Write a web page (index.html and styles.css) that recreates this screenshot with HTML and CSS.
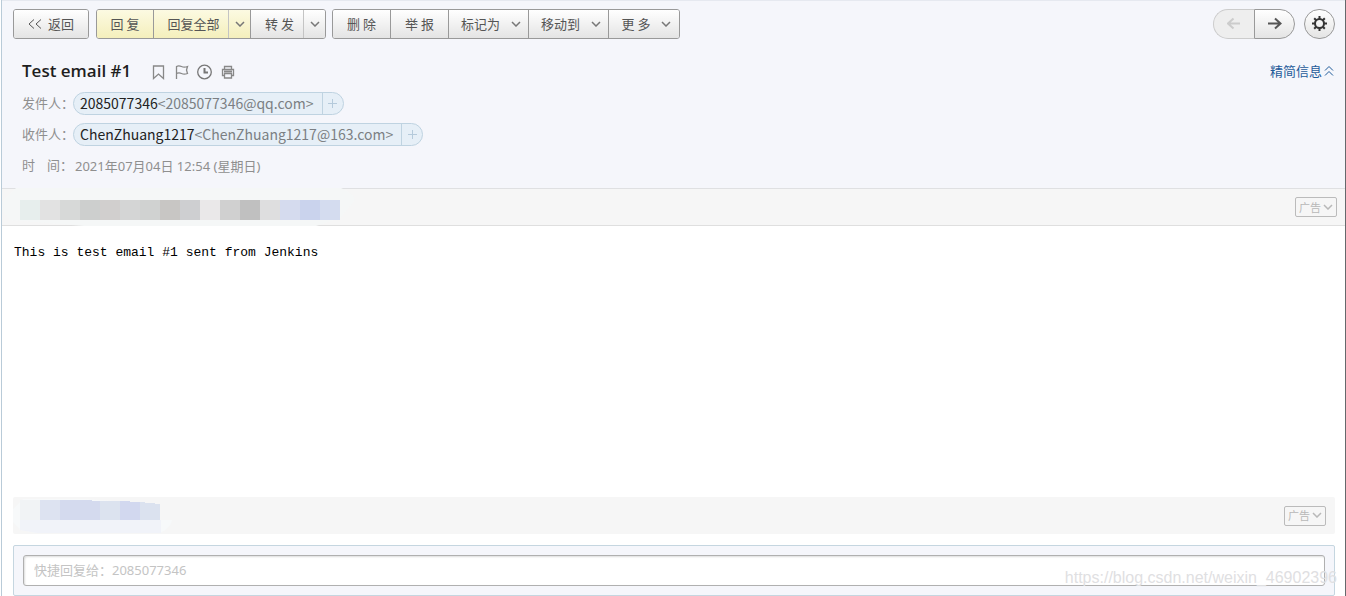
FILE: index.html
```html
<!DOCTYPE html>
<html lang="zh-CN">
<head>
  <meta charset="UTF-8" />
  <meta name="viewport" content="width=device-width, initial-scale=1.0" />
  <title>Test email #1</title>
  <link rel="stylesheet" href="styles.css">
</head>
<body>
  <main class="mail">
    <header class="mail-head">
      <div class="toolbar">
        <div class="btn-group">
          <button class="btn btn-back"><span class="back-mark"><svg width="14" height="10" viewBox="0 0 14 10"><path d="M6 .5 1 5l5 4.5M13 .5 8 5l5 4.5" /></svg></span>返回</button>
        </div>
        <div class="btn-group">
          <button class="btn btn-reply yellow">回 复</button>
          <button class="btn btn-all yellow">回复全部</button>
          <button class="btn btn-arrow yellow" aria-label="更多回复方式"><svg class="arrow" width="10" height="6" viewBox="0 0 10 6"><path d="M1 1l4 4 4-4" /></svg></button>
          <button class="btn btn-forward">转 发</button>
          <button class="btn btn-arrow" aria-label="更多转发方式"><svg class="arrow" width="10" height="6" viewBox="0 0 10 6"><path d="M1 1l4 4 4-4" /></svg></button>
        </div>
        <div class="btn-group">
          <button class="btn btn-reply delete">删 除</button>
          <button class="btn btn-reply">举 报</button>
          <button class="btn btn-menu">标记为<svg class="arrow" width="10" height="6" viewBox="0 0 10 6"><path d="M1 1l4 4 4-4" /></svg></button>
          <button class="btn btn-menu">移动到<svg class="arrow" width="10" height="6" viewBox="0 0 10 6"><path d="M1 1l4 4 4-4" /></svg></button>
          <button class="btn btn-more">更 多<svg class="arrow" width="10" height="6" viewBox="0 0 10 6"><path d="M1 1l4 4 4-4" /></svg></button>
        </div>
        <div class="pager">
          <button class="page-btn prev" disabled aria-label="上一封"><svg width="14" height="14" viewBox="0 0 14 14"><path d="M13 6.500H1M6.500 1.500 1 6.500l5.500 5" /></svg></button>
          <button class="page-btn next" aria-label="下一封"><svg width="14" height="14" viewBox="0 0 14 14"><path d="M0 6.500h12.500M7 1.500l5.500 5-5.500 5" /></svg></button>
          <button class="setting" aria-label="设置"><svg width="16" height="16" viewBox="0 0 16 16"><circle cx="7.500" cy="7.500" r="4.500" /><path d="M7.500 0v3M7.500 12v3M0 7.500h3M12 7.500h3M2.200 2.200l2 2M10.800 10.800l2 2M12.800 2.200l-2 2M4.200 10.800l-2 2" /></svg></button>
        </div>
      </div>

      <div class="subject-row">
        <h1>Test email #1</h1>
        <div class="marks">
          <button class="mark" aria-label="书签"><svg width="16" height="16" viewBox="0 0 16 16"><path d="M3.500 3h10v12.500l-5-4.500-5 4.500z" /></svg></button>
          <button class="mark" aria-label="红旗"><svg width="16" height="16" viewBox="0 0 16 16"><path d="M3.500 16V3.500c2-1.300 3-1 5 0s3.500 1 6 0l-1 3.500 1 3.500c-2.500 1-4 1-6 0s-3-1-5 0" /></svg></button>
          <button class="mark clock" aria-label="待办"><svg width="16" height="16" viewBox="0 0 16 16"><circle cx="8.500" cy="9" r="6.800" /><path class="bold" d="M8.500 5V9.500H12" /></svg></button>
          <button class="mark" aria-label="打印"><svg width="16" height="16" viewBox="0 0 16 16"><path d="M5.500 6V3.500h7V6M5 12.500H3.500v-6h11v6H13M5.500 10.500h7V15h-7z" /><path class="bold" d="M5 8.500h8" /></svg></button>
        </div>
        <a class="simple" href="#">精简信息<svg width="10" height="12" viewBox="0 0 10 12"><path d="M1 5.500l4-4 4 4M1 10.500l4-4 4 4" /></svg></a>
      </div>

      <dl class="info">
        <div class="info-row">
          <dt>发件人：</dt>
          <dd class="contact"><span class="addr"><b>2085077346</b>&lt;2085077346@qq.com&gt;</span><button class="add" aria-label="添加联系人"><svg width="9" height="9" viewBox="0 0 9 9"><path d="M0 4.500h9M4.500 0v9" /></svg></button></dd>
        </div>
        <div class="info-row">
          <dt>收件人：</dt>
          <dd class="contact"><span class="addr"><b>ChenZhuang1217</b>&lt;ChenZhuang1217@163.com&gt;</span><button class="add" aria-label="添加联系人"><svg width="9" height="9" viewBox="0 0 9 9"><path d="M0 4.500h9M4.500 0v9" /></svg></button></dd>
        </div>
        <div class="info-row">
          <dt class="time-label"><span>时</span><span>间：</span></dt>
          <dd class="time">2021年07月04日 12:54 (星期日)</dd>
        </div>
      </dl>
    </header>

    <div class="ad ad-top">
      <svg class="mosaic" width="360" height="38" viewBox="0 0 360 38">
        <path fill="#f5f7f7" d="M0 14 14 0h325q12 5 14 12l-15 18-24 8H82L8 32 0 22z" />
        <g shape-rendering="crispEdges">
          <path fill="#e7eeed" d="M18 12h20v20H18z" />
          <path fill="#e2e2e2" d="M38 12h20v20H38z" />
          <path fill="#d7d9d8" d="M58 12h20v20H58z" />
          <path fill="#cdcfce" d="M78 12h20v20H78z" />
          <path fill="#d1cfce" d="M98 12h20v20H98z" />
          <path fill="#d4d5d5" d="M118 12h20v20h-20z" />
          <path fill="#d0d2d1" d="M138 12h20v20h-20z" />
          <path fill="#c8c6c4" d="M158 12h20v20h-20z" />
          <path fill="#cecfd1" d="M178 12h20v20h-20z" />
          <path fill="#eae8e9" d="M198 12h20v20h-20z" />
          <path fill="#d0d0d0" d="M218 12h20v20h-20z" />
          <path fill="#c0c0c0" d="M238 12h20v20h-20z" />
          <path fill="#dededf" d="M258 12h20v20h-20z" />
          <path fill="#d5dbee" d="M278 12h20v20h-20z" />
          <path fill="#cad3ed" d="M298 12h20v20h-20z" />
          <path fill="#d4dcef" d="M318 12h20v20h-20z" />
        </g>
      </svg>
      <button class="ad-tag">广告<svg class="arrow" width="10" height="6" viewBox="0 0 10 6"><path d="M1 1l4 4 4-4" /></svg></button>
    </div>

    <pre class="content">This is test email #1 sent from Jenkins</pre>

    <div class="ad ad-bottom">
      <svg class="mosaic" width="170" height="37" viewBox="0 0 170 37">
        <path fill="#f7f9fa" d="M0 12 10 2h60l77 5v16h12q-1 8-12 13H24L7 33 0 25z" />
        <path fill="#f1f3f9" d="M7 23h141v13H24L7 33z" />
        <g shape-rendering="crispEdges">
          <path fill="#f1f3f5" d="M7 3h20v20H7z" />
          <path fill="#dde3f1" d="M27 3h20v20H27z" />
          <path fill="#d4daee" d="M47 3h24l16 1v19H47z" />
          <path fill="#dce3ef" d="M87 4h20v19H87z" />
          <path fill="#d2d8ef" d="M107 4l20 1v18h-20z" />
          <path fill="#dbe2ef" d="M127 5l20 2v16h-20z" />
        </g>
      </svg>
      <button class="ad-tag">广告<svg class="arrow" width="10" height="6" viewBox="0 0 10 6"><path d="M1 1l4 4 4-4" /></svg></button>
    </div>

    <form class="quick-reply">
      <input class="reply-input" type="text" aria-label="快捷回复" placeholder="快捷回复给：2085077346" />
    </form>
  </main>
  <span class="watermark">https://blog.csdn.net/weixin_46902396</span>
</body>
</html>
```
FILE: styles.css
```css
* {
  box-sizing: border-box;
}
body {
  position: relative;
  margin: 0;
  padding-left: 1px;
  background: #fff;
  color: #222;
  font-family: "Noto Sans", "Noto Sans CJK SC", sans-serif;
  font-size: 13px;
}
button {
  margin: 0;
  padding: 0;
  border: 0;
  background: none;
  color: inherit;
  font-family: "Noto Sans CJK SC", sans-serif;
  font-size: 13px;
  cursor: pointer;
}
svg {
  flex: none;
  fill: none;
  stroke: currentColor;
}
.mail {
  display: flex;
  flex-direction: column;
  min-height: 100vh;
  border-left: 1px solid #b9cbd8;
  border-right: 1px solid #66696c;
}
.mail-head {
  height: 189px;
  border-top: 1px solid #e6e9f0;
  border-bottom: 1px solid #dfe0e2;
  background: #f5f6fb;
}

/* 工具栏 */
.toolbar {
  display: flex;
  gap: 6px;
  padding: 8px 10px 0 11px;
}
.btn-group {
  display: flex;
  height: 30px;
  border: 1px solid #999;
  border-radius: 3px;
  overflow: hidden;
}
.btn-group:first-child {
  margin-right: 1px;
}
.btn {
  display: flex;
  align-items: center;
  justify-content: center;
  gap: 11px;
  padding-bottom: 2px;
  border-left: 1px solid #999;
  background: linear-gradient(#fff, #e4e4e4);
  color: #555;
}
.btn:first-child {
  border-left: 0;
}
.btn.yellow {
  background: linear-gradient(#fcfae2, #f4efbc);
}
.arrow {
  stroke-width: 1.5;
}
.btn .arrow {
  margin-top: 2px;
  color: #777;
}
.btn-back {
  width: 74px;
  gap: 6px;
}
.back-mark {
  display: flex;
  margin-top: 2px;
}
.btn-reply {
  width: 58px;
}
.btn-reply:first-child {
  width: 56px;
}
.btn.btn-reply.delete {
  width: 57px;
}
.btn-all {
  width: 75px;
  padding-left: 5px;
}
.btn-forward {
  width: 53px;
  padding-left: 5px;
}
.btn.btn-arrow {
  width: 22px;
  border-left-color: #c4c4c4;
}
.btn-menu {
  width: 80px;
  padding-left: 5px;
}
.btn-more {
  width: 71px;
  padding-left: 5px;
}
.pager {
  display: flex;
  margin-left: auto;
}
.page-btn,
.setting {
  display: flex;
  align-items: center;
  justify-content: center;
  height: 30px;
  border: 1px solid #999;
  background: linear-gradient(#fff, #e4e4e4);
  color: #555;
}
.page-btn {
  width: 41px;
}
.page-btn svg {
  stroke-width: 2;
}
.prev {
  border-color: #ccc;
  border-right: 0;
  border-radius: 15px 0 0 15px;
  background: #eee;
  color: #ccc;
}
.next {
  border-radius: 0 15px 15px 0;
}
.setting {
  width: 31px;
  margin-left: 9px;
  border-radius: 15px;
  color: #333;
}
.setting svg {
  stroke-width: 2;
}

/* 主题 */
.subject-row {
  display: flex;
  align-items: center;
  height: 24px;
  margin-top: 20px;
  padding: 0 11px 0 20px;
}
.subject-row h1 {
  margin: 0;
  color: #1e1e1e;
  font-family: "Open Sans", sans-serif;
  font-size: 17px;
  font-weight: 600;
  line-height: 26px;
}
.marks {
  display: flex;
  gap: 7px;
  margin-left: 19px;
  color: #888;
}
.mark {
  display: flex;
}
.mark svg {
  overflow: visible;
  stroke-width: 1.3;
}
.clock {
  color: #777;
}
.mark .bold {
  stroke-width: 2;
}
.simple {
  display: flex;
  align-items: center;
  gap: 2px;
  margin-left: auto;
  color: #1e5a99;
  line-height: 20px;
  text-decoration: none;
}

/* 发件人、收件人、时间 */
.info {
  display: flex;
  flex-direction: column;
  gap: 8px;
  margin: 9px 0 0;
  padding-left: 20px;
  color: #8f8f8f;
}
.info-row {
  display: flex;
  align-items: center;
  height: 23px;
}
.info dt {
  width: 51px;
  padding-bottom: 2px;
  white-space: nowrap;
}
.info dd {
  margin: 0;
}
.info .time-label {
  display: flex;
  gap: 12px;
  width: 53px;
}
.contact {
  display: flex;
  height: 23px;
  border: 1px solid #bfd3e1;
  border-radius: 12px;
  background: #e6eff7;
}
.addr {
  padding: 0 8px 0 6px;
  color: #7b7f83;
  font-family: "Noto Sans CJK SC", sans-serif;
  font-size: 14px;
  line-height: 20px;
}
.addr b {
  color: #222;
  font-weight: normal;
}
.add {
  display: flex;
  align-items: center;
  justify-content: center;
  width: 21px;
  border-left: 1px solid #bfd3e1;
  color: #b5cadb;
}

/* 广告条 */
.ad {
  display: flex;
  align-items: center;
  justify-content: space-between;
  height: 37px;
  background: #f6f6f6;
}
.ad-top {
  padding-right: 8px;
  border-bottom: 1px solid #dfdfdf;
}
.ad-bottom {
  margin: 0 10px 0 11px;
  padding-right: 9px;
  border-radius: 2px;
}
.mosaic {
  stroke: none;
}
.ad-tag {
  display: flex;
  align-items: center;
  justify-content: center;
  gap: 2px;
  width: 42px;
  height: 20px;
  padding-bottom: 1px;
  border: 1px solid #bbb;
  border-radius: 2px;
  color: #b8b8b8;
  font-size: 11px;
}

.content {
  flex: 1;
  margin: 0;
  padding: 18px 12px;
  color: #000;
  font-family: "Liberation Mono", monospace;
  font-size: 13px;
  line-height: 18px;
}

/* 快捷回复 */
.quick-reply {
  margin: 11px 10px 0 11px;
  padding: 9px;
  border: 1px solid #c5d6e0;
  border-radius: 2px;
  background: #f5f6fb;
}
.reply-input {
  display: block;
  width: 100%;
  height: 31px;
  padding: 0 10px 2px;
  border: 1px solid #b0b0b0;
  border-radius: 3px;
  background: #fff;
  box-shadow: inset 1px 1px 2px #ddd;
  font-family: inherit;
  font-size: 13px;
}
.reply-input::placeholder {
  color: #c4c4c4;
}
.watermark {
  position: absolute;
  right: 9px;
  bottom: 9px;
  color: #dfe0e2;
  font-family: "Liberation Sans", sans-serif;
  font-size: 16px;
  line-height: 18px;
}
```
